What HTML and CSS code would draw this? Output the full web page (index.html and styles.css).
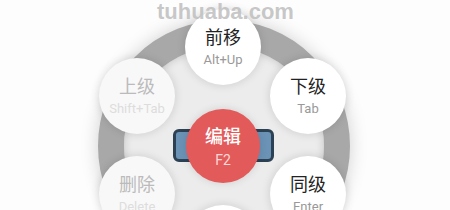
FILE: index.html
```html
<!DOCTYPE html>
<html lang="zh">
<head>
<meta charset="utf-8">
<title>Radial menu</title>
<link rel="stylesheet" href="styles.css">
</head>
<body>
<div class="stage">
  <div class="ring"></div>
  <div class="bar"></div>
  <div class="node n-top"><span class="title">前移</span><span class="key">Alt+Up</span></div>
  <div class="node n-rt"><span class="title">下级</span><span class="key">Tab</span></div>
  <div class="node n-rb"><span class="title">同级</span><span class="key">Enter</span></div>
  <div class="node n-bottom"></div>
  <div class="node n-lb disabled"><span class="title">删除</span><span class="key">Delete</span></div>
  <div class="node n-lt disabled"><span class="title">上级</span><span class="key">Shift+Tab</span></div>
  <div class="node center"><span class="title">编辑</span><span class="key">F2</span></div>
  <div class="watermark">tuhuaba.com</div>
</div>
</body>
</html>
```
FILE: styles.css
```css
html, body {
  margin: 0;
  padding: 0;
  background: #fff;
}
.stage {
  position: relative;
  width: 450px;
  height: 210px;
  overflow: hidden;
  background: #fdfdfd;
  font-family: "Roboto", "Noto Sans CJK SC", sans-serif;
}
.ring {
  position: absolute;
  left: 98px;
  top: 20px;
  width: 200px;
  height: 200px;
  border: 26px solid #a8a8a8;
  border-radius: 50%;
  background: #ececec;
  box-shadow: 0 0 18px rgba(0,0,0,0.18), inset 0 0 8px rgba(0,0,0,0.18);
}
.bar {
  position: absolute;
  left: 173px;
  top: 129px;
  width: 95px;
  height: 27px;
  border: 3px solid #2d4154;
  border-radius: 6px;
  background: #6b93b6;
}
.node {
  position: absolute;
  width: 76px;
  height: 76px;
  margin: -38px 0 0 -38px;
  border-radius: 50%;
  background: #fff;
  box-shadow: 0 0 10px rgba(0,0,0,0.14);
  display: flex;
  flex-direction: column;
  align-items: center;
  justify-content: center;
}
.title {
  font-size: 18px;
  line-height: 22px;
  color: #222;
}
.key {
  font-size: 13px;
  line-height: 16px;
  margin-top: 3px;
  color: #999;
}
.disabled { background: #f8f8f8; }
.disabled .title { color: #bbb; }
.disabled .key { color: #ddd; }
.n-top { left: 223px; top: 47px; }
.n-rt { left: 308px; top: 96px; }
.n-rb { left: 308px; top: 194px; }
.n-bottom { left: 223px; top: 243px; }
.n-lb { left: 137px; top: 194px; }
.n-lt { left: 137px; top: 96px; }
.center {
  left: 223px;
  top: 146px;
  width: 74px;
  height: 74px;
  margin: -37px 0 0 -37px;
  padding-top: 2px;
  box-sizing: border-box;
  background: #e35a5a;
  box-shadow: 0 0 8px rgba(0,0,0,0.12);
}
.center .title { color: #fff; font-weight: 500; }
.center .key { color: #fbd7d7; font-size: 14px; margin-top: 4px; }
.watermark {
  position: absolute;
  left: 157px;
  top: -1px;
  font-family: "Liberation Sans", Arial, sans-serif;
  font-weight: bold;
  font-size: 22px;
  color: rgba(190,190,190,0.85);
}
```
